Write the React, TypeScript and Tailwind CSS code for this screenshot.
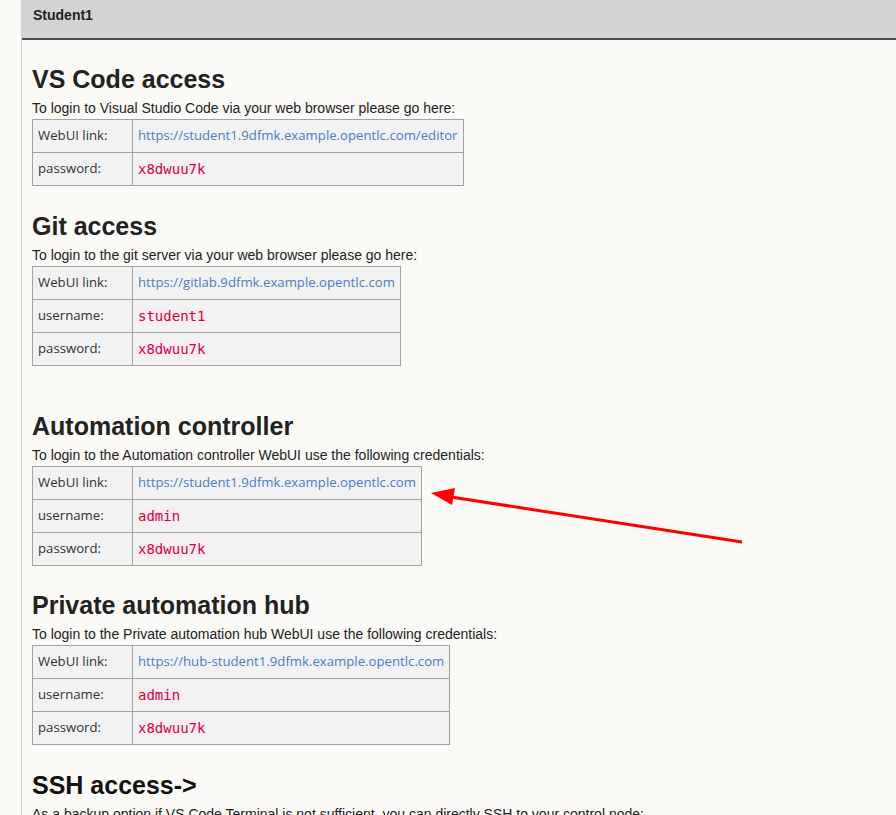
import React from "react";

type Row = { label: string; value: string; kind: "link" | "code" };

const sections: { title: string; desc: string; rows: Row[]; extra?: boolean; mt: string }[] = [
  {
    title: "VS Code access",
    desc: "To login to Visual Studio Code via your web browser please go here:",
    mt: "mt-[25px]",
    rows: [
      { label: "WebUI link:", value: "https://student1.9dfmk.example.opentlc.com/editor", kind: "link" },
      { label: "password:", value: "x8dwuu7k", kind: "code" },
    ],
  },
  {
    title: "Git access",
    desc: "To login to the git server via your web browser please go here:",
    extra: true,
    mt: "mt-[27px]",
    rows: [
      { label: "WebUI link:", value: "https://gitlab.9dfmk.example.opentlc.com", kind: "link" },
      { label: "username:", value: "student1", kind: "code" },
      { label: "password:", value: "x8dwuu7k", kind: "code" },
    ],
  },
  {
    title: "Automation controller",
    desc: "To login to the Automation controller WebUI use the following credentials:",
    mt: "mt-[26px]",
    rows: [
      { label: "WebUI link:", value: "https://student1.9dfmk.example.opentlc.com", kind: "link" },
      { label: "username:", value: "admin", kind: "code" },
      { label: "password:", value: "x8dwuu7k", kind: "code" },
    ],
  },
  {
    title: "Private automation hub",
    desc: "To login to the Private automation hub WebUI use the following credentials:",
    mt: "mt-[26px]",
    rows: [
      { label: "WebUI link:", value: "https://hub-student1.9dfmk.example.opentlc.com", kind: "link" },
      { label: "username:", value: "admin", kind: "code" },
      { label: "password:", value: "x8dwuu7k", kind: "code" },
    ],
  },
];

function CredTable({ rows }: { rows: Row[] }) {
  return (
    <table className="border-collapse bg-[#f2f2f2] font-['Open_Sans',sans-serif] text-[13.2px]">
      <tbody>
        {rows.map((r) => (
          <tr key={r.label} className="h-[33px]">
            <td className="w-[100px] border border-[#a3a3a3] px-[5px] align-middle text-[#333]">{r.label}</td>
            <td className="border border-[#a3a3a3] px-[5px] align-middle">
              {r.kind === "link" ? (
                <span className="text-[#4a7cc6]">{r.value}</span>
              ) : (
                <code className="bg-[#f8eef1] font-['DejaVu_Sans_Mono',monospace] text-[14px] text-[#d7003f]">{r.value}</code>
              )}
            </td>
          </tr>
        ))}
      </tbody>
    </table>
  );
}

export default function App() {
  return (
    <div className="flex h-[815px] w-[896px] overflow-hidden bg-[#fbfaf7] font-['Liberation_Sans',Arial,sans-serif] text-[#222]">
      <div className="w-[22px] shrink-0 border-r border-[#cfcfcf] bg-[#fbfaf7]" />
      <div className="relative flex-1">
        <div className="h-[40px] border-b-2 border-[#4b4b58] bg-[#d3d3d3] pl-[11px] pt-[6px] text-[14px] font-bold leading-[18px] text-[#222]">
          Student1
        </div>
        <div className="pl-[10px]">
          {sections.map((s) => (
            <div key={s.title} className={s.extra ? "pb-[21px]" : ""}>
              <h2 className={`${s.mt} text-[25px] font-bold leading-[28px] text-[#222]`}>{s.title}</h2>
              <p className="mt-[5px] text-[14px] leading-[20px]">{s.desc}</p>
              <div className="mb-[-1px] mt-[1px]">
                <CredTable rows={s.rows} />
              </div>
            </div>
          ))}
          <h2 className="mt-[27px] text-[25px] font-bold leading-[28px] text-[#111]">SSH access-&gt;</h2>
          <p className="mt-[5px] whitespace-nowrap text-[14px] leading-[20px]">
            As a backup option if VS Code Terminal is not sufficient, you can directly SSH to your control node:
          </p>
        </div>
        <svg className="pointer-events-none absolute left-0 top-0" width="874" height="815" viewBox="0 0 874 815">
          <line x1="720" y1="542" x2="429" y2="497" stroke="#ff0000" strokeWidth="3" />
          <polygon points="409,493 433,488 430,505" fill="#ff0000" />
        </svg>
      </div>
    </div>
  );
}
